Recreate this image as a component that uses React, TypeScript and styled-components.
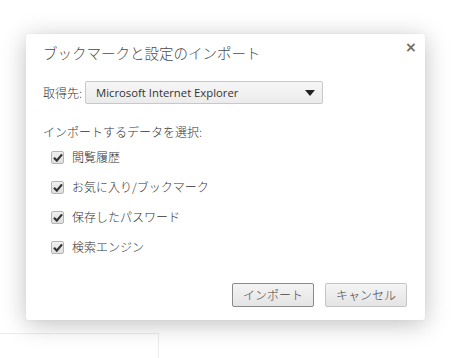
import React from "react";
import styled, { createGlobalStyle } from "styled-components";

const Global = createGlobalStyle`
  html, body { margin: 0; padding: 0; background: #fff; }
  body { font-family: "Noto Sans CJK JP", "Open Sans", sans-serif; color: #333; }
`;

const JP = `"Noto Sans CJK JP", sans-serif`;
const LATIN = `"Open Sans", "Noto Sans CJK JP", sans-serif`;

const Page = styled.div`
  width: 457px;
  height: 358px;
  position: relative;
  overflow: hidden;
  padding: 34px 0 0 26px;
  box-sizing: border-box;
`;

const Backdrop = styled.div`
  width: 158px;
  height: 40px;
  margin: 13px 0 0 -26px;
  border-top: 1px solid #ececec;
  border-right: 1px solid #ececec;
`;

const Dialog = styled.div`
  position: relative;
  width: 399px;
  height: 286px;
  box-sizing: border-box;
  background: #fff;
  border-radius: 2px;
  box-shadow: 0 4px 24px rgba(0, 0, 0, 0.25), 0 0 1px rgba(0, 0, 0, 0.15);
  padding: 9px 18px 13px 17px;
  display: flex;
  flex-direction: column;
`;

const Title = styled.div`
  font-family: ${JP};
  font-size: 14.5px;
  font-weight: 300;
  line-height: 20px;
  color: #4a4a4a;
`;

const Close = styled.div`
  position: absolute;
  top: 6px;
  right: 8px;
  width: 12px;
  height: 14px;
  font-family: "DejaVu Sans", sans-serif;
  font-size: 14px;
  font-weight: bold;
  line-height: 14px;
  color: #6e6e6e;
`;

const SourceRow = styled.div`
  margin-top: 18px;
  display: flex;
  align-items: center;
  gap: 3px;
`;

const Label = styled.span`
  display: block;
  font-family: ${JP};
  font-size: 12px;
  font-weight: 300;
  line-height: 18px;
  color: #333;
`;

const Select = styled.div`
  width: 238px;
  height: 23px;
  box-sizing: border-box;
  border: 1px solid #c8c8c8;
  border-radius: 2px;
  background: linear-gradient(#f6f6f6, #ebebeb);
  display: flex;
  align-items: center;
  justify-content: space-between;
  padding: 0 7px 0 10px;
  font-family: ${LATIN};
  font-size: 11.3px;
  color: #333;
`;

const Section = styled.div`
  margin-top: 19px;
`;

const Options = styled.div`
  margin-top: 6px;
  padding-left: 8px;
  display: flex;
  flex-direction: column;
  gap: 10px;
`;

const Option = styled.label`
  display: flex;
  align-items: center;
  gap: 8px;
  height: 20px;
`;

const Box = styled.span`
  width: 13px;
  height: 13px;
  box-sizing: border-box;
  border: 1px solid #b5b5b5;
  border-radius: 2px;
  background: linear-gradient(#f0f0f0, #dedede);
  display: flex;
  align-items: center;
  justify-content: center;
`;

const Buttons = styled.div`
  margin-top: auto;
  display: flex;
  justify-content: flex-end;
  gap: 11px;
`;

const Button = styled.button<{ $focused?: boolean }>`
  width: 82px;
  height: 24px;
  box-sizing: border-box;
  border: 1px solid ${(p) => (p.$focused ? "#8a8a8a" : "#c4c4c4")};
  border-radius: 2px;
  background: linear-gradient(#f4f4f4, #e4e4e4);
  font-family: ${JP};
  font-size: 12px;
  font-weight: 300;
  color: #444;
  padding: 0;
  line-height: 20px;
`;

const Check = () => (
  <svg width="10" height="9" viewBox="0 0 10 9">
    <path d="M1 4.8 L3.8 7.6 L9 1.4" fill="none" stroke="#333" strokeWidth="2.2" />
  </svg>
);

const Arrow = () => (
  <svg width="10" height="6" viewBox="0 0 10 6">
    <path d="M0 0 H10 L5 6 Z" fill="#222" />
  </svg>
);

const items = ["閲覧履歴", "お気に入り/ブックマーク", "保存したパスワード", "検索エンジン"];

export default function App() {
  return (
    <Page>
      <Global />
      <Dialog>
        <Title>ブックマークと設定のインポート</Title>
        <Close>×</Close>
        <SourceRow>
          <Label>取得先:</Label>
          <Select>
            <span>Microsoft Internet Explorer</span>
            <Arrow />
          </Select>
        </SourceRow>
        <Section>
          <Label>インポートするデータを選択:</Label>
          <Options>
            {items.map((t) => (
              <Option key={t}>
                <Box>
                  <Check />
                </Box>
                <Label>{t}</Label>
              </Option>
            ))}
          </Options>
        </Section>
        <Buttons>
          <Button $focused>インポート</Button>
          <Button>キャンセル</Button>
        </Buttons>
      </Dialog>
      <Backdrop />
    </Page>
  );
}
